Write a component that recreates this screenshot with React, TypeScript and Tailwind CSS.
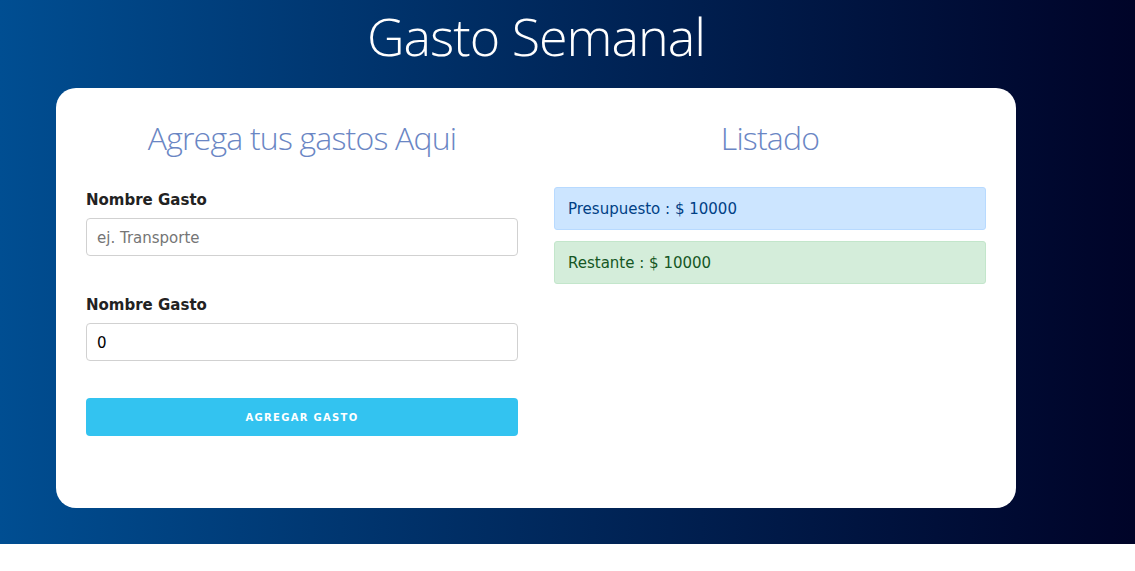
const body = { fontFamily: '"Comic Sans MS", "DejaVu Sans", sans-serif' };
const thin = { fontFamily: '"Open Sans", "Lato", sans-serif' };

const Field = ({ label, placeholder, value }: { label: string; placeholder?: string; value?: string }) => (
  <div>
    <label className="block text-[15px] font-bold leading-6 text-[#222] mb-[6px] pt-[1px]">{label}</label>
    <input
      className="block w-full h-[38px] px-[10px] pt-[2px] text-[15px] text-black border border-[#d1d1d1] rounded-[4px] bg-white outline-none placeholder:text-[#757575]"
      placeholder={placeholder}
      defaultValue={value}
      style={body}
    />
  </div>
);

export default function App() {
  return (
    <div className="bg-white min-h-[571px]" style={body}>
      <div className="h-[544px] bg-gradient-to-r from-[#004e92] to-[#000428]">
        <div className="w-[1072px]">
          <h1
            className="text-center text-white text-[52px] font-light leading-[72px] tracking-[-1px]"
            style={thin}
          >
            Gasto Semanal
          </h1>
          <div className="mx-auto mt-[16px] w-[960px] h-[420px] bg-white rounded-[20px] px-[30px] pt-[27px] flex gap-[36px]">
            <div className="w-[432px]">
              <h2
                className="text-center text-[32px] font-light leading-[45px] tracking-[-0.8px] text-[#6a86c4] mb-[27px]"
                style={thin}
              >
                Agrega tus gastos Aqui
              </h2>
              <Field label="Nombre Gasto" placeholder="ej. Transporte" />
              <div className="mt-[36px]">
                <Field label="Nombre Gasto" value="0" />
              </div>
              <button
                className="mt-[37px] w-full h-[38px] rounded-[4px] bg-[#33c3f0] text-white text-[10px] font-bold uppercase tracking-[1.3px]"
                style={{ fontFamily: '"DejaVu Sans", sans-serif' }}
              >
                Agregar Gasto
              </button>
            </div>
            <div className="w-[432px]">
              <h2
                className="text-center text-[32px] font-light leading-[45px] tracking-[-0.8px] text-[#6a86c4] mb-[27px]"
                style={thin}
              >
                Listado
              </h2>
              <div className="h-[43px] flex items-center px-[13px] pt-[2px] bg-[#cce5ff] border border-[#b8daff] rounded-[3px] text-[15px] text-[#004085]">
                Presupuesto : $ 10000
              </div>
              <div className="mt-[11px] h-[43px] flex items-center px-[13px] pt-[2px] bg-[#d4edda] border border-[#c3e6cb] rounded-[3px] text-[15px] text-[#155724]">
                Restante : $ 10000
              </div>
            </div>
          </div>
        </div>
      </div>
    </div>
  );
}
